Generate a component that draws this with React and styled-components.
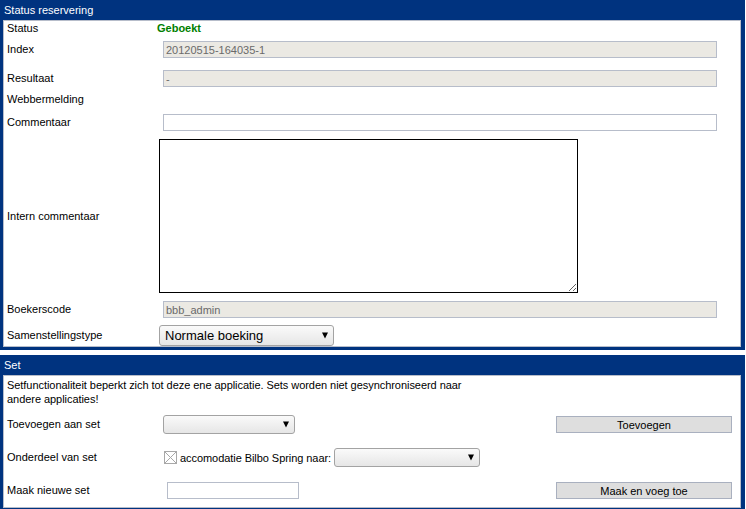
import React from 'react';
import styled, { createGlobalStyle } from 'styled-components';

const GlobalStyle = createGlobalStyle`
	body {
		margin: 0;
		background: #fff;
		font-family: "Liberation Sans", Arial, sans-serif;
		font-size: 11px;
		color: #000;
	}
`;

const Panel = styled.section`
	width: 745px;
	box-sizing: border-box;
	background: #00337f;
	padding: 0 4px 3px 3px;

	& + & {
		margin-top: 5px;
	}
`;

const PanelTitle = styled.h2`
	margin: 0;
	height: 20px;
	line-height: 20px;
	padding-left: 1px;
	font-size: 11px;
	font-weight: normal;
	color: #fff;
`;

const PanelBody = styled.div`
	background: #fff;
	border: 1px solid #b7bdca;
	padding: 0 3px ${(p) => p.$bottom || 0}px;
`;

const Row = styled.div`
	display: grid;
	grid-template-columns: ${(p) => p.$cols || '150px 1fr'};
	align-items: center;
	margin-top: ${(p) => p.$top || 0}px;
	min-height: ${(p) => p.$h || 14}px;
	line-height: 14px;
`;

const Label = styled.div`
	white-space: nowrap;
	margin-top: -1px;
`;

const Cell = styled.div`
	display: flex;
	align-items: center;
	padding-left: ${(p) => p.$indent || 0}px;
`;

const StatusText = styled.span`
	color: #008000;
	font-weight: bold;
`;

const TextInput = styled.input`
	box-sizing: border-box;
	width: ${(p) => p.$w}px;
	height: 17px;
	margin: 0;
	padding: 0 2px;
	border: 1px solid #b7bdca;
	background: ${(p) => (p.disabled ? '#ebe9e3' : '#fff')};
	color: #6a6a6a;
	font: 11px "Liberation Sans", Arial, sans-serif;
	outline: none;
`;

const TextArea = styled.textarea`
	box-sizing: border-box;
	width: 419px;
	height: 154px;
	margin: 0;
	border: 1px solid #000;
	background: #fff;
	display: block;
	font: 11px "Liberation Sans", Arial, sans-serif;
`;

const SelectBox = styled.div`
	box-sizing: border-box;
	width: ${(p) => p.$w}px;
	height: ${(p) => p.$h}px;
	display: flex;
	align-items: center;
	justify-content: space-between;
	padding: 0 5px 0 5px;
	border: 1px solid #a3a3a3;
	border-radius: 3px;
	background: linear-gradient(#fafafa, #e6e6e6);
	font-size: 13px;
	color: #000;
`;

const Arrow = () => (
	<svg width="6" height="7" viewBox="0 0 6 7">
		<path d="M0 0.5 H6 L3 6.5 Z" fill="#000" />
	</svg>
);

const Select = ({ w, h, value }) => (
	<SelectBox $w={w} $h={h}>
		<span>{value}</span>
		<Arrow />
	</SelectBox>
);

const Note = styled.p`
	margin: 2px 0 0;
	width: 470px;
	line-height: 14px;
	letter-spacing: -0.05px;
`;

const Button = styled.button`
	box-sizing: border-box;
	width: 176px;
	height: 17px;
	margin: 0;
	padding: 0;
	border: 1px solid #a9b0bf;
	background: #dedede;
	font: 11px "Liberation Sans", Arial, sans-serif;
	color: #000;
`;

const Inline = styled.span`
	margin: 0 3px 0 3px;
	white-space: nowrap;
	letter-spacing: -0.06px;
`;

const CrossedBox = () => (
	<svg width="13" height="13" viewBox="0 0 13 13">
		<rect x="0.5" y="0.5" width="12" height="12" fill="#fff" stroke="#a8a8a8" />
		<path d="M1 1 L12 12 M12 1 L1 12" stroke="#a8a8a8" strokeWidth="1" />
	</svg>
);

const SetCols = '150px 399px 176px';

export default function App() {
	return (
		<>
			<GlobalStyle />
			<Panel>
				<PanelTitle>Status reservering</PanelTitle>
				<PanelBody>
					<Row>
						<Label>Status</Label>
						<Cell>
							<StatusText>Geboekt</StatusText>
						</Cell>
					</Row>
					<Row $top={6} $h={17}>
						<Label>Index</Label>
						<Cell $indent={6}>
							<TextInput $w={554} disabled value="20120515-164035-1" readOnly />
						</Cell>
					</Row>
					<Row $top={12} $h={17}>
						<Label>Resultaat</Label>
						<Cell $indent={6}>
							<TextInput $w={554} disabled value="-" readOnly />
						</Cell>
					</Row>
					<Row $top={5}>
						<Label>Webbermelding</Label>
						<Cell />
					</Row>
					<Row $top={8} $h={17}>
						<Label>Commentaar</Label>
						<Cell $indent={6}>
							<TextInput $w={554} defaultValue="" />
						</Cell>
					</Row>
					<Row $top={8} $h={154}>
						<Label>Intern commentaar</Label>
						<Cell $indent={2}>
							<TextArea />
						</Cell>
					</Row>
					<Row $top={8} $h={17}>
						<Label>Boekerscode</Label>
						<Cell $indent={6}>
							<TextInput $w={554} disabled value="bbb_admin" readOnly />
						</Cell>
					</Row>
					<Row $top={7} $h={21}>
						<Label>Samenstellingstype</Label>
						<Cell $indent={2}>
							<Select w={175} h={21} value="Normale boeking" />
						</Cell>
					</Row>
				</PanelBody>
			</Panel>

			<Panel>
				<PanelTitle>Set</PanelTitle>
				<PanelBody $bottom={8}>
					<Note>
						Setfunctionaliteit beperkt zich tot deze ene applicatie. Sets worden niet
						gesynchroniseerd naar andere applicaties!
					</Note>
					<Row $cols={SetCols} $top={9} $h={19}>
						<Label>Toevoegen aan set</Label>
						<Cell $indent={6}>
							<Select w={132} h={19} value="" />
						</Cell>
						<Button>Toevoegen</Button>
					</Row>
					<Row $cols={SetCols} $top={14} $h={19}>
						<Label>Onderdeel van set</Label>
						<Cell $indent={7}>
							<CrossedBox />
							<Inline>accomodatie Bilbo Spring naar:</Inline>
							<Select w={146} h={19} value="" />
						</Cell>
						<div />
					</Row>
					<Row $cols={SetCols} $top={15} $h={17}>
						<Label>Maak nieuwe set</Label>
						<Cell $indent={10}>
							<TextInput $w={132} defaultValue="" />
						</Cell>
						<Button>Maak en voeg toe</Button>
					</Row>
				</PanelBody>
			</Panel>
		</>
	);
}
